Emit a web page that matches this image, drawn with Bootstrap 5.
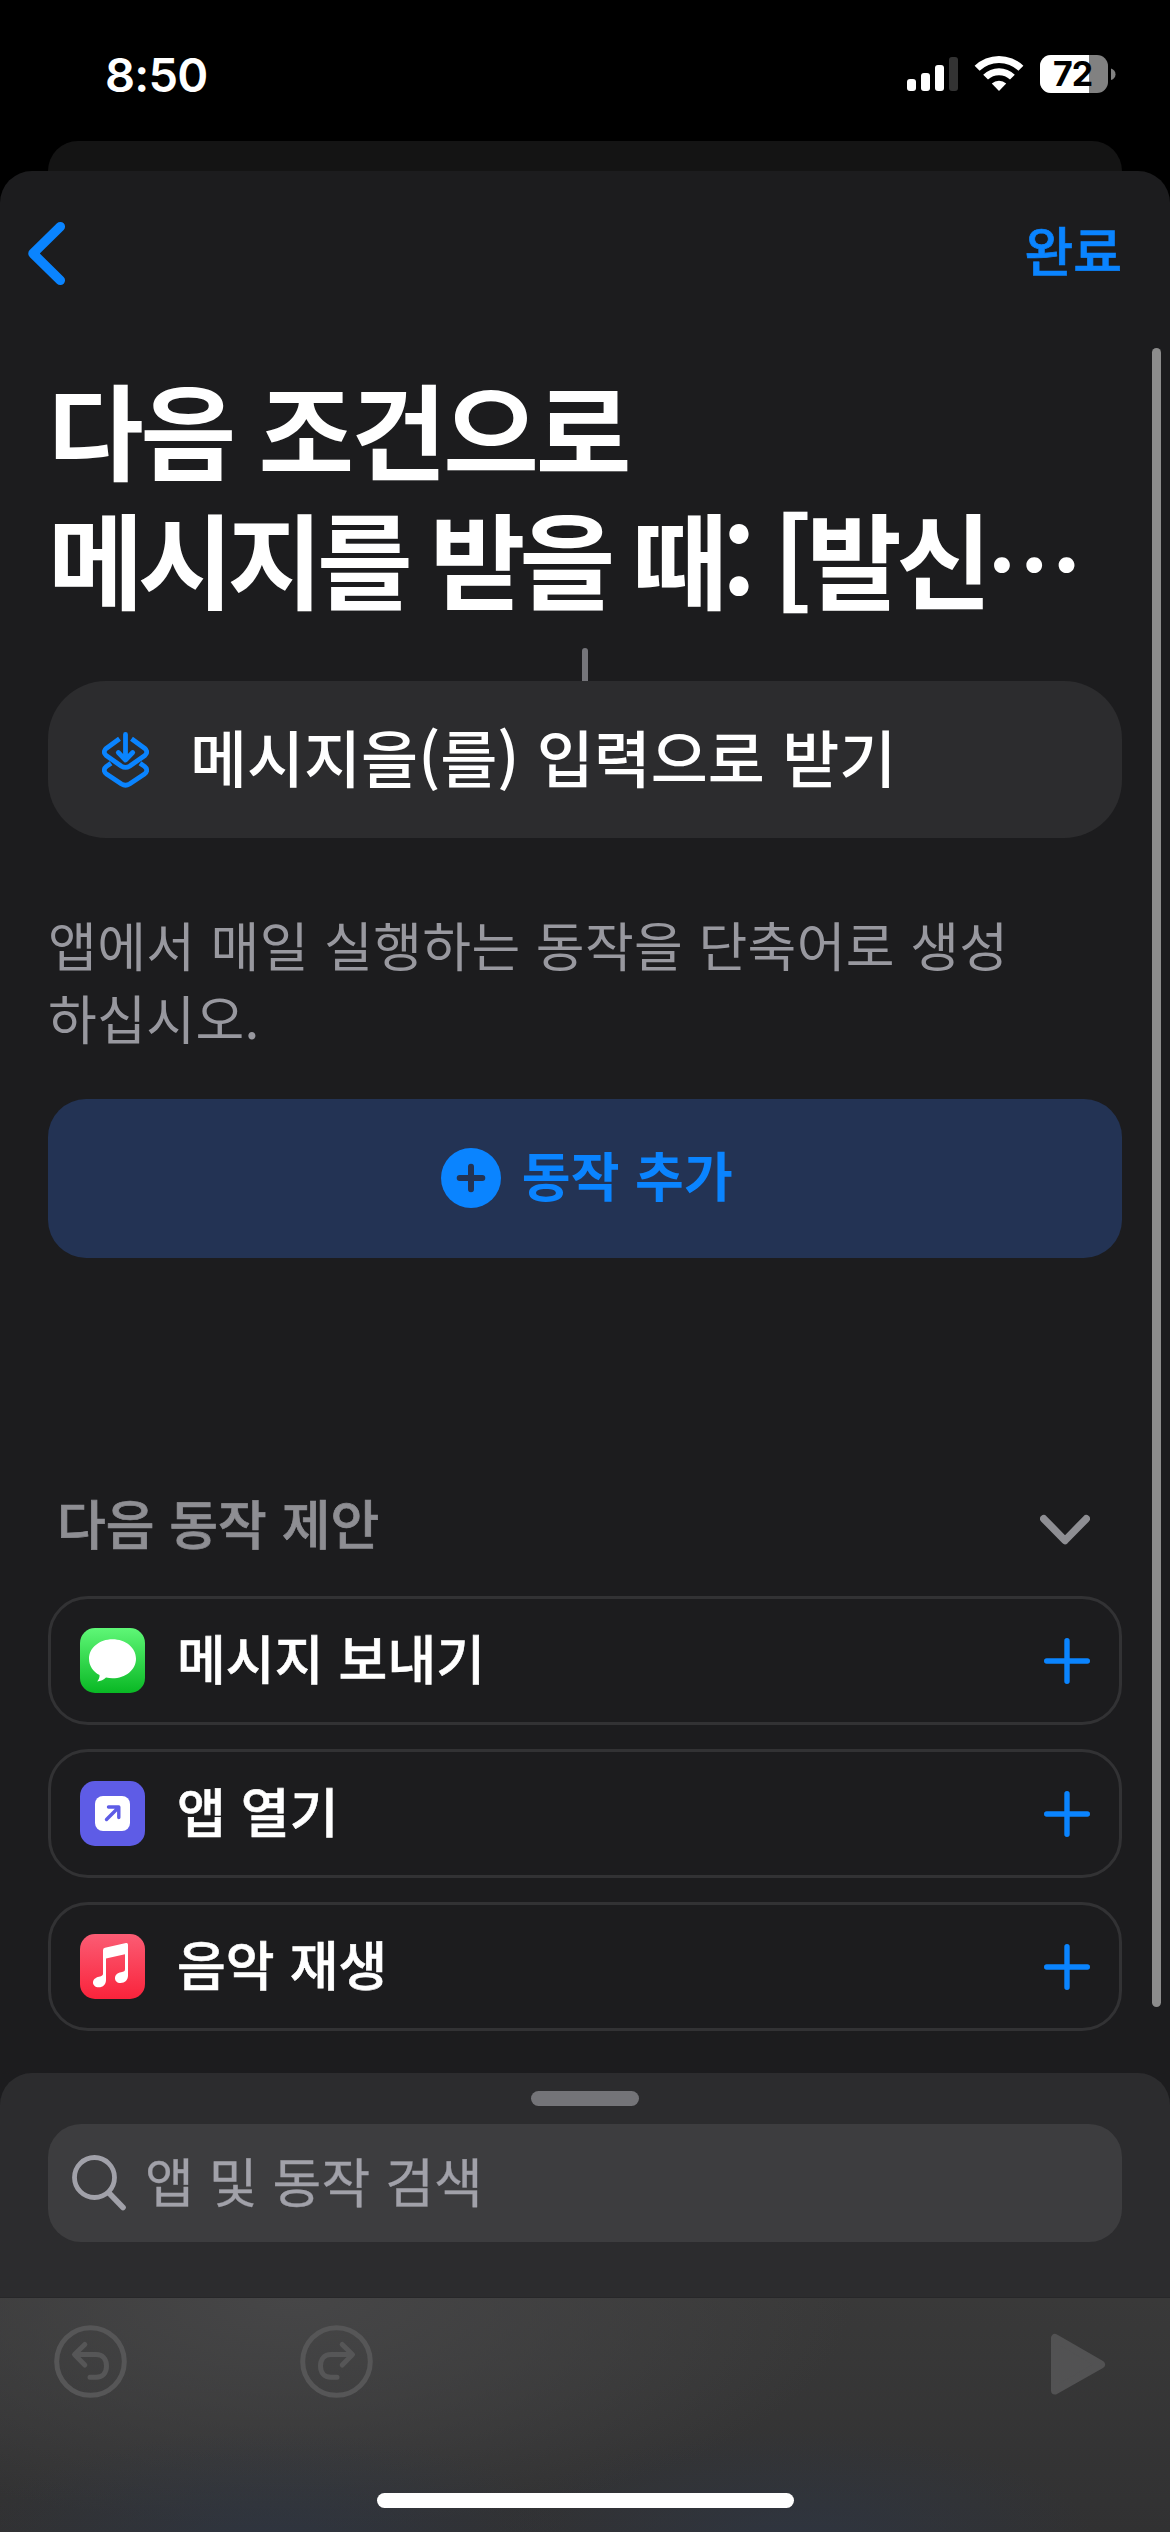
<!DOCTYPE html>
<html lang="ko" data-bs-theme="dark">
<head>
<meta charset="utf-8">
<meta name="viewport" content="width=device-width, initial-scale=1">
<title>단축어</title>
<link href="https://cdn.jsdelivr.net/npm/bootstrap@5.3.0/dist/css/bootstrap.min.css" rel="stylesheet">
<style>
  :root { --ios-blue: #0a84ff; --ios-gray: #8e8e93; }
  html, body { margin: 0; background: #000; }
  body { width: 1170px; height: 2532px; overflow: hidden; color: #fff;
    font-family: "Noto Sans CJK KR", sans-serif; }
  svg { display: block; flex: none; }
  .screen { width: 1170px; height: 2532px; }
  .statusbar { height: 141px; padding: 0 54px 0 105px; font-family: Inter, sans-serif; }
  .clock { font-size: 47px; font-weight: 600; line-height: 56px; padding-top: 47px; letter-spacing: -.8px; }
  .status-icons { padding-top: 55px; }
  .status-icons svg { overflow: visible; }
  .sheet-behind { height: 30px; margin: 0 48px; background: #141414; border-radius: 30px 30px 0 0; }
  .sheet { height: 1902px; background: #1c1c1e; border-radius: 32px 32px 0 0; padding: 0 48px; }
  .sheet-wrap { background: linear-gradient(#000 0 400px, #1c1c1e 400px); }
  .topbar { height: 165px; margin-left: -20px; }
  .done { color: var(--ios-blue); font-size: 53px; line-height: 80px; font-weight: 500; margin-top: 38px; -webkit-text-stroke: .7px; }
  .big-title { font-size: 104px; line-height: 129px; font-weight: 700; margin: 27px 0 0; height: 285px; white-space: nowrap; }
  .big-title span { display: block; }
  .title-a { letter-spacing: -3.3px; }
  .title-b { letter-spacing: -6px; }
  .dots { font-size: 97px; letter-spacing: 0; }
  .stem { width: 6px; height: 33px; background: #75757a; border-radius: 3px 3px 0 0; margin: 0 auto; }
  .input-card { height: 157px; background: #2c2c2e; border-radius: 58px; padding-left: 54px; border: 0; }
  .input-card .txt { font-size: 62px; font-weight: 500; line-height: 90px; padding: 0 0 8px 41px; letter-spacing: 0; }
  .hint { margin: 70px 0 0; font-size: 53px; line-height: 73px; height: 191px; color: #98989f; white-space: nowrap; letter-spacing: .37px; }
  .add-btn { height: 159px; border-radius: 38px; background: #233354 !important; color: var(--ios-blue) !important; border: 0; font-size: 53px; font-weight: 600; line-height: 80px; gap: 21px; padding: 0 0 0 4px; letter-spacing: .3px; }
  .add-btn span { padding-bottom: 9px; }
  .add-btn svg { margin-top: -1px; }
  .sect { height: 338px; padding: 228px 32px 0 9px; color: var(--ios-gray); font-size: 53px; font-weight: 500; line-height: 80px; -webkit-text-stroke: .7px; }
  .sect span { margin-top: -4px; }
  .stack { gap: 24px; }
  .sugg { height: 129px; border: 3px solid #323234; border-radius: 40px; padding: 0 29px 0 29px; font-size: 53px; font-weight: 500; line-height: 80px; }
  .sugg .txt { padding: 0 0 8px 32px; -webkit-text-stroke: .6px; letter-spacing: .1px; }
  .app-ic { width: 65px; height: 65px; border-radius: 15px; overflow: hidden; }
  .scroller { left: 1152px; top: 348px; width: 9px; height: 1659px; border-radius: 5px; background: #8c8c8c; }
  .drawer-wrap { background: #1c1c1e; }
  .drawer { height: 224px; background: #2c2c2e; border-radius: 32px 32px 0 0; padding: 18px 48px 0; }
  .grabber { width: 108px; height: 15px; border-radius: 8px; background: #747478; margin: 0 auto 18px; }
  .search { height: 118px; background: #3d3d3f; border-radius: 33px; padding-left: 24px; color: #a1a1a9; font-size: 53px; line-height: 80px; }
  .search .txt { padding: 0 0 7px 19px; letter-spacing: .1px; -webkit-text-stroke: .3px; }
  .toolbar-b { height: 235px; border-top: 1px solid #272729; padding: 27px 64px 0 54px;
    background: radial-gradient(ellipse 300px 110px at 23% 104%, rgba(46,54,68,.75), transparent),
      radial-gradient(ellipse 300px 110px at 68% 104%, rgba(46,54,68,.75), transparent),
      radial-gradient(ellipse 560px 230px at 25% 0, #464647, transparent), linear-gradient(#393939, #313132); color: #565657; }
  .home-ind { left: 377px; top: 2493px; width: 417px; height: 15px; border-radius: 8px; background: #fff; }
</style>
</head>
<body>
<div class="screen position-relative d-flex flex-column">
  <header class="statusbar d-flex justify-content-between align-items-start">
    <div class="clock">8:50</div>
    <div class="status-icons d-flex">
      <svg width="209" height="38" viewBox="907 55 209 38" fill="#fff">
        <rect x="907" y="79" width="9" height="12" rx="3"/><rect x="921" y="73" width="9" height="18" rx="3"/>
        <rect x="935" y="65" width="9" height="26" rx="3"/><rect x="949" y="57" width="9" height="34" rx="3" fill="#333"/>
        <path d="M974.6 65.8A35 35 0 0 1 1023.4 65.8L1018.4 70.7A28 28 0 0 0 979.6 70.7Z"/>
        <path d="M983.2 74.8A22.500 22.500 0 0 1 1014.8 74.8L1010 79.600A15.800 15.800 0 0 0 988 79.600Z"/>
        <path d="M991.8 83.600A10.500 10.500 0 0 1 1006.200 83.600L999 91Z"/>
        <rect x="1040" y="55" width="68" height="38" rx="11" fill="#818181"/>
        <path d="M1051 55h38v38h-38a11 11 0 0 1-11-11V66a11 11 0 0 1 11-11z"/>
        <path d="M1111 68.500q4.500 1.500 4.500 5.800t-4.500 5.800z" fill="#818181"/>
        <text x="1072.500" y="86.300" text-anchor="middle" font-family="Inter" font-weight="700" font-size="34" letter-spacing="-1" fill="#000">72</text>
      </svg>
    </div>
  </header>
  <div class="sheet-behind"></div>
  <div class="sheet-wrap">
  <main class="sheet">
    <nav class="topbar d-flex justify-content-between align-items-start">
      <svg width="38" height="165" viewBox="28 171 38 165" fill="none" stroke="#0a84ff" stroke-width="9.500" stroke-linecap="round" stroke-linejoin="round"><path d="M60.300 226.700L33 253.500L60.300 280.300"/></svg>
      <a class="done text-decoration-none">완료</a>
    </nav>
    <h1 class="big-title"><span class="title-a">다음 조건으로</span><span class="title-b">메시지를 받을 때: [발신<small class="dots">⋯</small></span></h1>
    <div class="stem"></div>
    <div class="input-card card flex-row align-items-center">
      <svg width="47" height="56" viewBox="0 0 47 56" fill="none" stroke="#0a84ff" stroke-width="4.800" stroke-linecap="round" stroke-linejoin="round">
        <path d="M17.500 6.800L4.500 16.200Q0 20 4.500 23.800L19.500 34.200Q23.500 36.600 27.500 34.200L42.500 23.800Q47 20 42.500 16.200L29.500 6.800" stroke-linecap="butt"/>
        <path d="M9 31.200L4.500 34.400Q0 38.200 4.500 42L19.500 52Q23.500 54.400 27.500 52L42.500 42Q47 38.200 42.500 34.400L38 31.200" stroke-linecap="butt"/>
        <path d="M23.500 2.500V27M16.300 20.500L23.500 28L30.700 20.500"/>
      </svg>
      <span class="txt">메시지을(를) 입력으로 받기</span>
    </div>
    <p class="hint">앱에서 매일 실행하는 동작을 단축어로 생성<br>하십시오.</p>
    <button class="add-btn btn w-100 d-flex align-items-center justify-content-center">
      <svg width="60" height="60" viewBox="0 0 60 60"><circle cx="30" cy="30" r="30" fill="#0a84ff"/><path d="M30 18.700V41.300M18.700 30H41.300" stroke="#233354" stroke-width="6" stroke-linecap="round"/></svg>
      <span>동작 추가</span>
    </button>
    <div class="sect d-flex justify-content-between align-items-start">
      <span>다음 동작 제안</span>
      <svg width="50" height="80" viewBox="0 0 50 80" fill="none" stroke="#8e8e93" stroke-width="7.500" stroke-linecap="round" stroke-linejoin="round"><path d="M3.800 32.800L25 54.500L46.200 32.800"/></svg>
    </div>
    <div class="stack d-flex flex-column">
      <div class="sugg d-flex align-items-center">
        <svg class="app-ic" viewBox="0 0 65 65"><defs><linearGradient id="gm" x2="0" y2="1"><stop stop-color="#5ff777"/><stop offset="1" stop-color="#09b824"/></linearGradient></defs><rect width="65" height="65" fill="url(#gm)"/><path d="M32.500 11.200C19.500 11.200 9 19.700 9 30.700c0 7 4 12.800 10.500 16.300c.3 2.400-.8 4.700-2.300 6.600c3.500-.2 6.600-1.800 8.800-4c2.200.5 4.300.7 6.500.7c13 0 23.500-8.500 23.500-19.600S45.500 11.200 32.500 11.200z" fill="#fff"/></svg>
        <span class="txt flex-grow-1">메시지 보내기</span>
        <svg width="46" height="46" viewBox="0 0 46 46" stroke="#0a84ff" stroke-width="5.400" stroke-linecap="round"><path d="M23 2.700V43.300M2.700 23H43.300"/></svg>
      </div>
      <div class="sugg d-flex align-items-center">
        <svg class="app-ic" viewBox="0 0 65 65"><rect width="65" height="65" fill="#5e5ce6"/><rect x="15" y="15" width="35" height="35" rx="8" fill="#fff"/><path d="M26.500 38.500L38 27M28.500 26H38.800V36.500" fill="none" stroke="#5e5ce6" stroke-width="3.400" stroke-linecap="round" stroke-linejoin="round"/></svg>
        <span class="txt flex-grow-1">앱 열기</span>
        <svg width="46" height="46" viewBox="0 0 46 46" stroke="#0a84ff" stroke-width="5.400" stroke-linecap="round"><path d="M23 2.700V43.300M2.700 23H43.300"/></svg>
      </div>
      <div class="sugg d-flex align-items-center">
        <svg class="app-ic" viewBox="0 0 65 65"><defs><linearGradient id="gr" x2="0" y2="1"><stop stop-color="#fb5c74"/><stop offset="1" stop-color="#fa233b"/></linearGradient></defs><rect width="65" height="65" fill="url(#gr)"/><path d="M23 16.200Q23 14.300 25 13.800L46 9.100Q48 8.700 48 10.700V41.500C48 46 45 49 40.500 49C37 49 35 46.800 35 44.200C35 41 37.500 39 41 38.300C44 37.700 45 37.300 45 35V20.300L26 24.400V46C26 50.500 23 53.300 18.800 53.300C15 53.300 13 51 13 48.500C13 45.500 15.500 43.500 19 42.700C22 42 23 41.500 23 39.500Z" fill="#fff"/></svg>
        <span class="txt flex-grow-1">음악 재생</span>
        <svg width="46" height="46" viewBox="0 0 46 46" stroke="#0a84ff" stroke-width="5.400" stroke-linecap="round"><path d="M23 2.700V43.300M2.700 23H43.300"/></svg>
      </div>
    </div>
  </main>
  </div>
  <div class="drawer-wrap">
    <section class="drawer">
      <div class="grabber"></div>
      <div class="search d-flex align-items-center">
        <svg width="54" height="56" viewBox="0 0 54 56" fill="none" stroke="#a1a1a9" stroke-linecap="round"><circle cx="22.500" cy="22.500" r="20" stroke-width="4.800"/><path d="M37 38L51 52.500" stroke-width="5.600"/></svg>
        <span class="txt">앱 및 동작 검색</span>
      </div>
    </section>
  </div>
  <footer class="toolbar-b d-flex justify-content-between align-items-start">
    <div class="d-flex" style="gap:173px">
      <svg width="73" height="73" viewBox="0 0 73 73" fill="none" stroke="currentColor" stroke-width="5" stroke-linecap="round" stroke-linejoin="round"><circle cx="36.500" cy="36.500" r="33.800"/><path d="M30.800 19.500L20.500 29.500L30.800 40M21.500 29.500H42C49 29.500 52.500 34.500 52.500 41C52.500 47.500 49 52.200 42 52.200H36"/></svg>
      <svg width="73" height="73" viewBox="0 0 73 73" fill="none" stroke="currentColor" stroke-width="5" stroke-linecap="round" stroke-linejoin="round"><circle cx="36.500" cy="36.500" r="33.800"/><path d="M42.200 19.500L52.500 29.500L42.200 40M51.500 29.500H31C24 29.500 20.500 34.500 20.500 41C20.500 47.500 24 52.200 31 52.200H37"/></svg>
    </div>
    <svg width="55" height="80" viewBox="0 0 55 80" fill="#525253" stroke="#525253" stroke-width="8" stroke-linejoin="round"><path d="M4 13V65.500L50 39.500Z"/></svg>
  </footer>
  <div class="scroller position-absolute"></div>
  <div class="home-ind position-absolute"></div>
</div>
<script src="https://cdn.jsdelivr.net/npm/bootstrap@5.3.0/dist/js/bootstrap.bundle.min.js"></script>
</body>
</html>
